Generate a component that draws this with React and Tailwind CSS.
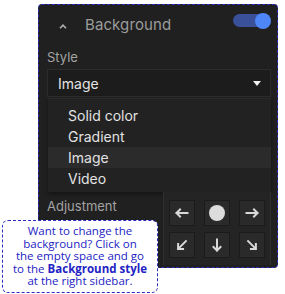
import React from 'react'

function Arrow({ rotate = 0 }) {
  return (
    <svg width="14" height="14" viewBox="0 0 14 14" style={{ transform: `rotate(${rotate}deg)` }}>
      <path d="M1.5 7h11M1.5 7l3.5-3.5M1.5 7l3.5 3.5" stroke="#d8d8d8" strokeWidth="2" fill="none" strokeLinecap="square" />
    </svg>
  )
}

function Cell({ children }) {
  return (
    <div className="w-[26px] h-[26px] bg-[#2a2a2a] border border-[#1b1b1b] flex items-center justify-center">
      {children}
    </div>
  )
}

export default function App() {
  const items = ['Solid color', 'Gradient', 'Image', 'Video']
  return (
    <div className="relative w-[285px] h-[294px] bg-white overflow-hidden" style={{ fontFamily: 'Inter, sans-serif' }}>
      <div className="ml-[38px] mt-[4px] w-[240px] h-[264px] bg-[#202020] border border-dashed border-[#2b2bb8] rounded-[4px] flex flex-col">
        <div className="flex items-center h-[37px] pl-[20px] pr-[6px]">
          <svg width="8" height="5" viewBox="0 0 8 5" className="mt-[6px]">
            <path d="M1 4.2L4 1.2L7 4.2" stroke="#b0b0b0" strokeWidth="1.6" fill="none" />
          </svg>
          <span className="ml-[18px] pt-[4px] text-[15px] text-[#9c9c9c] tracking-[0.1px]">Background</span>
          <div className="ml-auto mb-[6px] relative w-[38px] h-[16px] flex items-center">
            <div className="w-[34px] h-[13px] rounded-full bg-[#3a5099]" />
            <div className="absolute right-0 top-0 w-[16px] h-[16px] rounded-full bg-[#4f86f7]" />
          </div>
        </div>
        <div className="pl-[8px] pr-[6px]">
          <div className="text-[13px] text-[#a3a3a3] h-[22px] flex items-center mt-[5px]">Style</div>
          <div className="h-[28px] bg-[#1c1c1c] border border-[#2c2c2c] flex items-center pl-[10px] pr-[8px] text-[14px] text-[#e4e4e4]">
            Image
            <svg width="8" height="5" viewBox="0 0 8 5" className="ml-auto mr-[1px]">
              <path d="M0 0h8L4 5z" fill="#f0f0f0" />
            </svg>
          </div>
          <div className="ml-[1px] mt-[1px] h-[94px] bg-[#222222] border-t border-[#2a2a2a] pt-[6px] shadow-[0_2px_4px_rgba(0,0,0,0.4)]">
            {items.map((t) => (
              <div
                key={t}
                className={`h-[21px] flex items-center pl-[20px] text-[14px] text-[#e2e2e2] ${t === 'Image' ? 'bg-[#2b2b2b]' : ''}`}
              >
                {t}
              </div>
            ))}
          </div>
          <div className="flex">
            <div className="flex-1 text-[13px] text-[#a3a3a3] pt-[5px]">Adjustment</div>
            <div className="w-[108px] h-[73px] bg-[#242424] border-l border-r border-[#2f2f2f] pl-[5px] pt-[8px] grid grid-cols-[26px_26px_26px] gap-x-[9px] gap-y-[6px] content-start">
              <Cell><Arrow rotate={0} /></Cell>
              <Cell><div className="w-[16px] h-[16px] rounded-full bg-[#dcdcdc]" /></Cell>
              <Cell><Arrow rotate={180} /></Cell>
              <Cell><Arrow rotate={-45} /></Cell>
              <Cell><Arrow rotate={-90} /></Cell>
              <Cell><Arrow rotate={225} /></Cell>
            </div>
          </div>
        </div>
      </div>
      <div
        className="absolute left-[2px] top-[220px] w-[156px] h-[73px] bg-white border border-dashed border-[#2b2bc4] rounded-[6px] flex items-center justify-center text-center text-[11.5px] leading-[12.5px] text-[#2323c4]"
        style={{ fontFamily: '"Open Sans", sans-serif' }}
      >
        <p>
          Want to change the
          <br />
          background? Click on
          <br />
          the empty space and go
          <br />
          to the <b>Background style</b>
          <br />
          at the right sidebar.
        </p>
      </div>
    </div>
  )
}
